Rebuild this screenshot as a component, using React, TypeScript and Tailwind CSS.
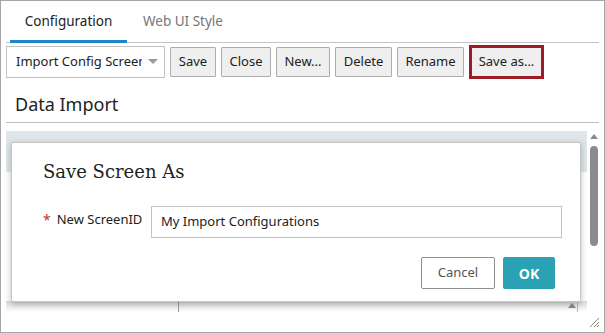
import { FC } from "react";

const font = { fontFamily: '"Segoe UI", "Noto Sans", sans-serif' };

const ToolButton: FC<{ label: string; w: string }> = ({ label, w }) => (
  <button
    className={`h-[30px] ${w} border border-[#adadad] bg-[#efefef] text-[13px] text-[#222] rounded-[1px] flex items-center justify-center`}
  >
    {label}
  </button>
);

const App: FC = () => {
  return (
    <div
      className="relative w-[605px] h-[333px] border border-[#a6a6a6] bg-white overflow-hidden text-[#222]"
      style={font}
    >
      {/* tabs */}
      <div className="mx-[5px] h-[42px] flex border-b border-[#c4c4c4]">
        <div className="ml-[4px] w-[117px] h-[42px] flex items-center justify-center text-[13.5px] text-[#222] border-b-[3px] border-[#1b87c9] pt-[1px]">
          Configuration
        </div>
        <div className="ml-[16px] h-[42px] flex items-center text-[13.5px] text-[#767676] pb-[2px]">
          Web UI Style
        </div>
      </div>

      {/* toolbar */}
      <div className="flex items-center h-[37px] pl-[5px] gap-[5px]">
        <div className="w-[159px] h-[32px] border border-[#c2c2c2] bg-white flex items-center pl-[9px] pr-[6px] text-[13px] overflow-hidden">
          <span className="whitespace-nowrap overflow-hidden w-[126px]">Import Config Screen</span>
          <span className="ml-auto w-0 h-0 border-l-[5px] border-r-[5px] border-t-[5px] border-l-transparent border-r-transparent border-t-[#9a9a9a]" />
        </div>
        <ToolButton label="Save" w="w-[46px]" />
        <ToolButton label="Close" w="w-[50px]" />
        <ToolButton label="New..." w="w-[54px]" />
        <ToolButton label="Delete" w="w-[57px]" />
        <ToolButton label="Rename" w="w-[67px]" />
        <button className="h-[34px] w-[75px] border-[3px] border-[#9d1c25] bg-[#efefef] text-[13px] text-[#222] flex items-center justify-center">
          Save as...
        </button>
      </div>

      {/* heading */}
      <div className="mx-[5px] h-[43px] border-b border-[#bdbdbd] flex items-center pl-[9px] pt-[6px] text-[18px] text-[#222]">
        Data Import
      </div>

      {/* grid area */}
      <div className="flex ml-[5px] mr-[3px]">
        <div className="flex-1 flex flex-col">
          <div className="mt-[8px] h-[41px] bg-[#dfe6e9]" />
          <div className="h-[129px]" />
          <div className="h-[11px] flex bg-gradient-to-b from-[#d9d9d9] to-white">
            <div className="w-[173px] border-r border-[#9a9a9a]" />
            <div className="flex-1" />
            <div className="w-[10px] flex justify-center pt-[2px]">
              <span className="w-0 h-0 border-l-[4px] border-r-[4px] border-b-[5px] border-l-transparent border-r-transparent border-b-[#8a8a8a]" />
            </div>
            <div className="w-[1px] bg-[#bcbcbc] mr-[9px]" />
          </div>
        </div>
        <div className="w-[14px] flex flex-col items-center">
          <span className="mt-[11px] w-0 h-0 border-l-[4px] border-r-[4px] border-b-[5px] border-l-transparent border-r-transparent border-b-[#8a8a8a]" />
          <span className="mt-[7px] w-[8px] h-[100px] rounded-full bg-[#8c8c8c]" />
        </div>
      </div>

      {/* resize grip */}
      <svg className="absolute right-[4px] bottom-[4px]" width="11" height="11" viewBox="0 0 11 11">
        <path d="M10 1 L1 10 M10 5 L5 10 M10 8 L8 10" stroke="#888" strokeWidth="1" />
      </svg>

      {/* dialog */}
      <div className="absolute left-[10px] top-[141px] w-[570px] h-[160px] bg-white border border-[#c6c6c6] rounded-[2px] shadow-[0_2px_6px_rgba(0,0,0,0.25)] flex flex-col">
        <div
          className="pl-[31px] pt-[15px] h-[52px] text-[18px] text-[#222]"
          style={{ fontFamily: '"DejaVu Serif", "Liberation Serif", serif' }}
        >
          Save Screen As
        </div>
        <div className="flex items-center h-[32px] mt-[11px]">
          <div className="pl-[31px] w-[139px] flex items-center text-[13px] pb-[5px]">
            <span className="text-[#c0392b] mr-[6px] text-[14px]">*</span>
            <span>New ScreenID</span>
          </div>
          <div className="w-[411px] h-[32px] border border-[#c2c2c2] flex items-center pl-[9px] text-[13px]">
            My Import Configurations
          </div>
        </div>
        <div className="flex justify-end gap-[8px] mt-[19px] pr-[25px]">
          <button className="w-[74px] h-[32px] border border-[#8f8f8f] rounded-[2px] bg-white text-[13px] text-[#555]">
            Cancel
          </button>
          <button className="w-[52px] h-[32px] rounded-[2px] bg-[#2ba2b3] text-[14px] font-bold text-white">
            OK
          </button>
        </div>
      </div>
    </div>
  );
};

export default App;
